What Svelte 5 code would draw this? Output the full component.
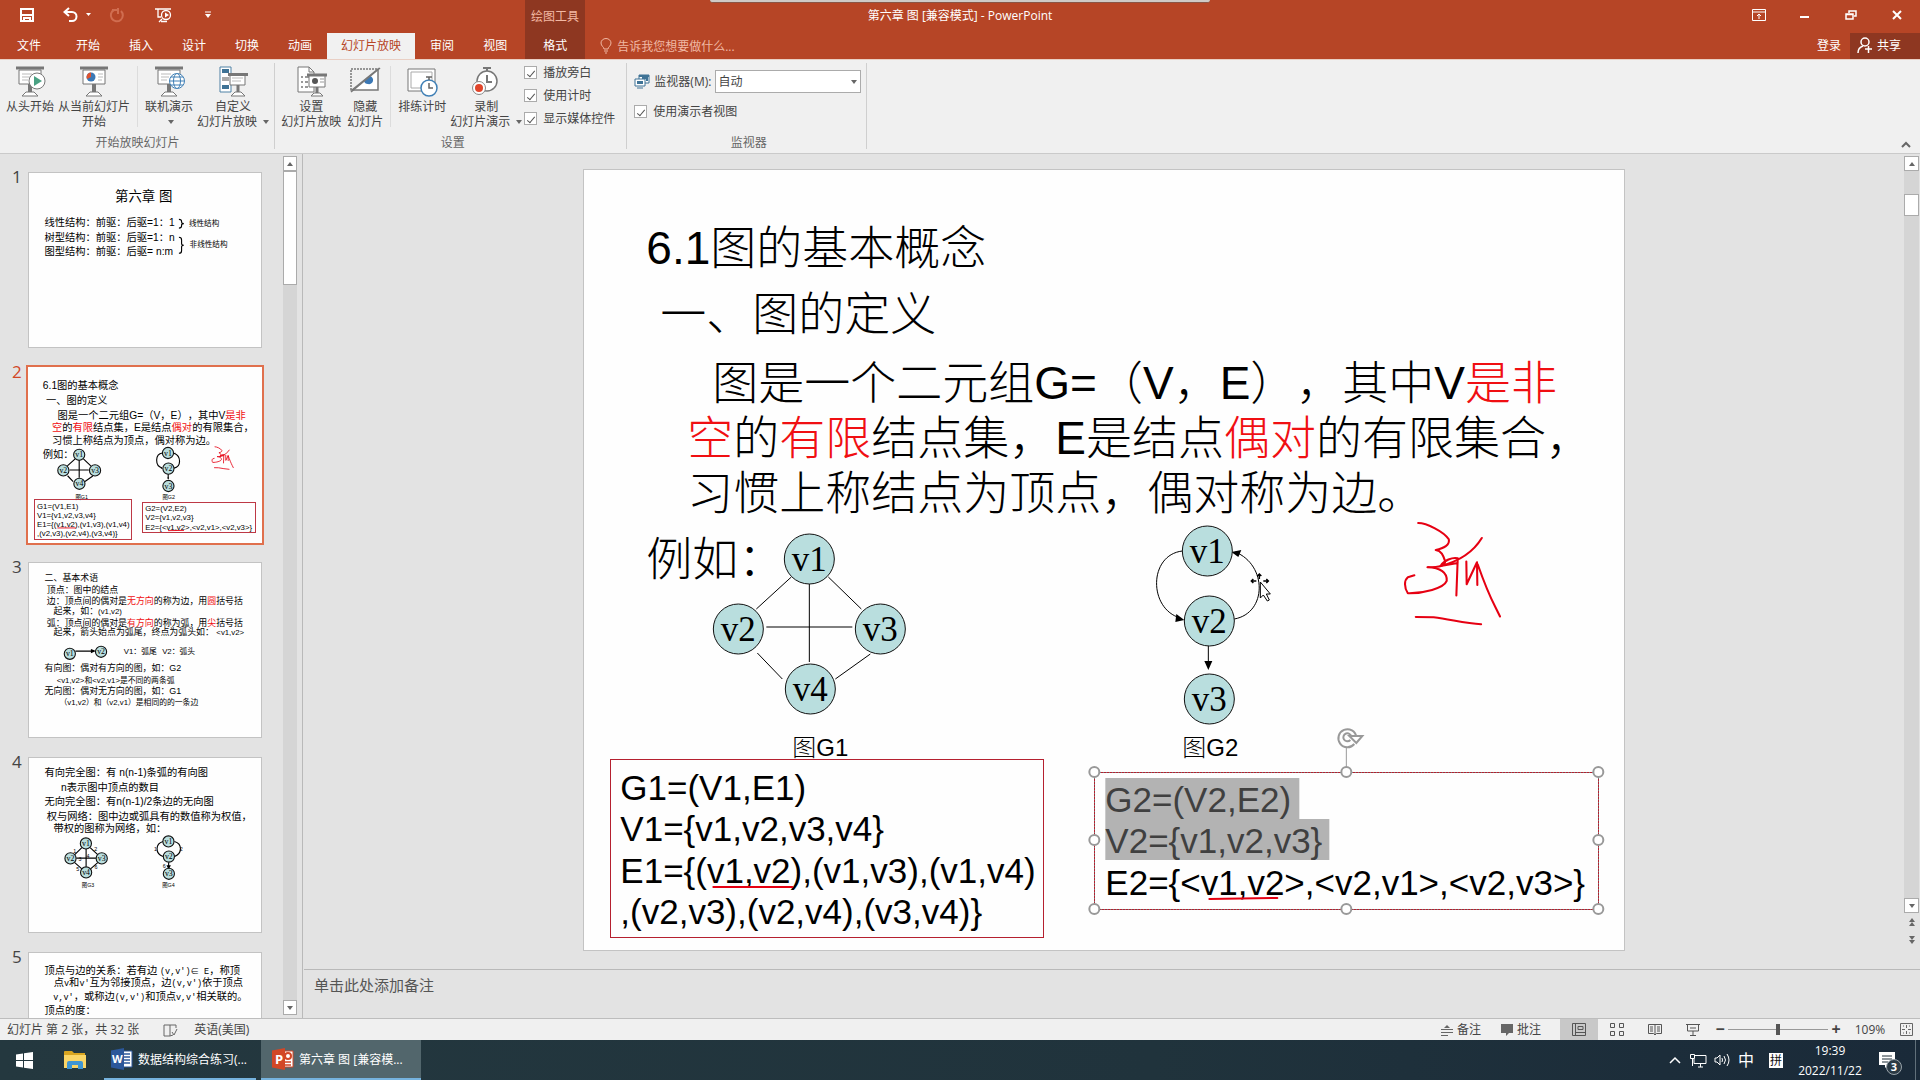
<script>
  const tabs = ['开始', '插入', '设计', '切换', '动画', '幻灯片放映', '审阅', '视图'];

  // Slide text: x, y is the baseline start; runs are [text, style?] pairs.
  const title = [
    { x: 62, y: 95, s: 46, runs: [['6.1图的基本概念']] },
    { x: 76, y: 161, s: 46, runs: [['一、图的定义']] },
    { x: 128, y: 230, s: 46, runs: [['图是一个二元组G=（V，E），其中V'], ['是非', 'red']] },
    { x: 103, y: 285, s: 46, runs: [['空', 'red'], ['的'], ['有限', 'red'], ['结点集，E是结点'], ['偶对', 'red'], ['的有限集合，']] },
    { x: 103, y: 340, s: 46, runs: [['习惯上称结点为顶点，偶对称为边。']] },
    { x: 62, y: 406, s: 46, runs: [['例如：']] },
    { x: 208, y: 587, s: 24, runs: [['图G1']] },
    { x: 598, y: 587, s: 24, runs: [['图G2']] },
    { x: 36, y: 631, s: 35, runs: [['G1=(V1,E1)']] },
    { x: 36, y: 672, s: 35, runs: [['V1={v1,v2,v3,v4}']] },
    { x: 36, y: 714, s: 35, runs: [['E1={(v1,v2),(v1,v3),(v1,v4)']] },
    { x: 36, y: 755, s: 35, runs: [[',(v2,v3),(v2,v4),(v3,v4)}']] },
    { x: 521, y: 726, s: 35, runs: [['E2={<v1,v2>,<v2,v1>,<v2,v3>}']] }
  ];
  const selectedLines = [
    { x: 521, y: 643, s: 35, runs: [['G2=(V2,E2)']] },
    { x: 521, y: 684, s: 35, runs: [['V2={v1,v2,v3}']] }
  ];

  const slides = [
    {
      texts: [
        { x: 386, y: 126, s: 60, runs: [['第六章 图']] },
        { x: 70, y: 238, s: 46, runs: [['线性结构：前驱：后驱=1：1']] },
        { x: 70, y: 304, s: 46, runs: [['树型结构：前驱：后驱=1：n']] },
        { x: 70, y: 368, s: 46, runs: [['图型结构：前驱：后驱= n:m']] },
        { x: 717, y: 238, s: 34, runs: [['线性结构']] },
        { x: 720, y: 332, s: 34, runs: [['非线性结构']] }
      ],
      paths: ['M672 209q12 0 12 9v4q0 6 10 6q-10 0-10 6v5q0 9-12 9', 'M672 289q12 0 12 12v16q0 8 10 8q-10 0-10 8v16q0 12-12 12'],
      nodes: []
    },
    { current: true },
    {
      texts: [
        { x: 70, y: 83, s: 40, runs: [['二、基本术语']] },
        { x: 80, y: 137, s: 40, runs: [['顶点：图中的结点']] },
        { x: 80, y: 186, s: 40, runs: [['边：顶点间的偶对是'], ['无方向', 'red'], ['的称为边，用'], ['圆', 'red'], ['括号括']] },
        { x: 110, y: 231, s: 40, runs: [['起来，如：'], ['(v1,v2)', 'small']] },
        { x: 80, y: 285, s: 40, runs: [['弧：顶点间的偶对是'], ['有方向', 'red'], ['的称为弧，用'], ['尖', 'red'], ['括号括']] },
        { x: 110, y: 325, s: 40, runs: [['起来，箭头始点为弧尾，终点为弧头如： '], ['<v1,v2>', 'small']] },
        { x: 425, y: 408, s: 35, runs: [['V1：弧尾']] },
        { x: 597, y: 408, s: 35, runs: [['V2：弧头']] },
        { x: 70, y: 484, s: 40, runs: [['有向图：偶对有方向的图，如：G2']] },
        { x: 124, y: 538, s: 35, runs: [['<v1,v2>和<v2,v1>是不同的两条弧']] },
        { x: 70, y: 587, s: 40, runs: [['无向图：偶对无方向的图，如：G1']] },
        { x: 137, y: 639, s: 35, runs: [['（v1,v2）和（v2,v1）是相同的的一条边']] }
      ],
      paths: ['M208 396H292M280 390l14 6l-14 6z'],
      nodes: [['v1', 183, 408], ['v2', 323, 399]]
    },
    {
      texts: [
        { x: 70, y: 82, s: 46, runs: [['有向完全图：有 n(n-1)条弧的有向图']] },
        { x: 144, y: 147, s: 46, runs: [['n表示图中顶点的数目']] },
        { x: 70, y: 212, s: 46, runs: [['无向完全图：有n(n-1)/2条边的无向图']] },
        { x: 80, y: 277, s: 46, runs: [['权与网络：图中边或弧具有的数值称为权值，']] },
        { x: 110, y: 331, s: 46, runs: [['带权的图称为网络，如：']] },
        { x: 237, y: 581, s: 24, runs: [['图G3']] },
        { x: 597, y: 581, s: 24, runs: [['图G4']] },
        { x: 198, y: 426, s: 24, runs: [['1']] },
        { x: 292, y: 420, s: 24, runs: [['2']] },
        { x: 258, y: 450, s: 24, runs: [['4']] },
        { x: 222, y: 462, s: 24, runs: [['3']] },
        { x: 212, y: 508, s: 24, runs: [['5']] },
        { x: 294, y: 500, s: 24, runs: [['6']] },
        { x: 560, y: 420, s: 24, runs: [['1']] },
        { x: 676, y: 420, s: 24, runs: [['2']] },
        { x: 600, y: 494, s: 24, runs: [['6']] }
      ],
      paths: [
        'M237 403L205 434M274 403L308 434M256 409V489M212 450H300M205 470L237 498M308 470L276 498',
        'M601 375C565 385 565 430 601 443M651 443C688 430 688 385 652 375M626 468V494M620 484l6 12l6-12z'
      ],
      nodes: [['v1', 255, 384], ['v2', 186, 451], ['v3', 326, 451], ['v4', 256, 514], ['v1', 625, 375], ['v2', 627, 443], ['v3', 627, 520]]
    },
    {
      texts: [
        { x: 69, y: 95, s: 46, runs: [['顶点与边的关系：若有边 '], ["(v,v')∈ E", 'mono'], ['，称顶']] },
        { x: 111, y: 149, s: 46, runs: [['点'], ['v', 'mono'], ['和'], ["v'", 'mono'], ['互为邻接顶点，边'], ["(v,v')", 'mono'], ['依于顶点']] },
        { x: 109, y: 210, s: 46, runs: [["v,v'", 'mono'], ['，或称边'], ["(v,v')", 'mono'], ['和顶点'], ["v,v'", 'mono'], ['相关联的。']] },
        { x: 69, y: 275, s: 46, runs: [['顶点的度：']] }
      ],
      paths: [],
      nodes: []
    }
  ];

  const graphNodes = [
    ['v1', 225, 390], ['v2', 154, 460], ['v3', 296, 460], ['v4', 226, 520],
    ['v1', 623, 382], ['v2', 625, 452], ['v3', 625, 530]
  ];
  const handles = [
    [510, 603], [762, 603], [1014, 603], [510, 671], [1014, 671], [510, 740], [762, 740], [1014, 740]
  ];
  let zoom = $state(50);
</script>

{#snippet textLine(t, cls)}
  <text class={cls} x={t.x} y={t.y} font-size={t.s}>{#each t.runs as r}<tspan class={r[1]}>{r[0]}</tspan>{/each}</text>
{/snippet}

{#snippet node(n)}
  <circle class="node" cx={n[1]} cy={n[2]} r="25" />
  <text class="node-label" x={n[1]} y={n[2] + 12} font-size="35" text-anchor="middle">{n[0]}</text>
{/snippet}

{#snippet graphSlide(editing)}
  {#if editing}
    <path fill="#b3b3b3" d="M521 609H715V650H745V691H521z" />
  {/if}
  <path class="ink" d="M207 408L172 440M244 408L277 440M225 415V493M182 458H268M173 484L198 510M286 485L251 510" />
  <path class="ink" d="M598 382C564 386 564 440 596 449M650 450C683 444 683 396 651 383M624 475V498" />
  <path d="M600 451l-8-6l-1 8zM647 383l10-2l-3 7zM620 492h8l-4 9z" />
  {#each graphNodes as n}{@render node(n)}{/each}
  {#each title as t}{@render textLine(t, '')}{/each}
  {#each selectedLines as t}{@render textLine(t, editing ? 'selected' : '')}{/each}
  <rect class="frame" x="26" y="590" width="433" height="178" />
  <rect class="frame" x="510" y="603" width="504" height="137" />
  <path class="pen" d="M129 718H208M625 730L693 729" />
  <g class="pen" transform="translate(495 332) scale(.344 .333)">
    <path d="M985 66C1010 66 1060 92 1074 115C1078 132 1060 142 1036 147C1054 150 1058 165 1063 180C1066 196 1040 200 1012 199C1050 200 1070 215 1068 240C1060 262 1000 278 955 277C944 260 944 238 955 229L974 223" />
    <path d="M1170 111C1150 145 1115 178 1050 195C1060 178 1085 168 1100 172L1096 284M1050 195L1100 186M1125 182L1126 250L1156 184L1157 252M1158 190C1175 240 1195 290 1210 320L1223 347" />
    <path d="M978 348L1030 349C1080 355 1120 368 1168 370" />
  </g>
  {#if editing}
    <rect class="dots" x="510" y="603" width="504" height="137" />
    <path d="M762 579V598" stroke="#999" />
    {#each handles as h}<circle class="handle" cx={h[0]} cy={h[1]} r="5" />{/each}
    <path d="M770 575A9 9 0 1 1 772 568" class="turn" />
    <path d="M766 571A4 4 0 1 1 767 568" class="turn" />
    <path d="M765 567h13l-6 7z" fill="#fff" stroke="#999" stroke-width="2" />
    <path d="M675 406v4M667 412h5M679 412h5M673 407l2-2l2 2M669 410l-2 2l2 2M682 410l2 2l-2 2" stroke="#000" stroke-width="1.500" fill="none" />
    <path d="M676 413v16l3-3l4 6l2-1l-3-6h4z" fill="#fff" stroke="#000" />
  {/if}
{/snippet}

{#snippet easel()}
  <path d="M5 4h22v14H5z" fill="#fff" stroke="#777" />
  <path d="M2 2h28" stroke="#777" stroke-width="3" />
  <path d="M16 18v8" stroke="#777" stroke-width="4" />
  <path d="M12 26h8l4 4H8z" fill="#fff" stroke="#777" />
{/snippet}

<div class="app">
  <header>
    <div class="titlebar">
      <div class="qat">
        <button aria-label="保存"><svg width="16" height="16" viewBox="0 0 16 16"><path d="M2 2h12v12H2zM2 8h12M5 14v-3h6v3" fill="none" stroke="#fff" stroke-width="2" /></svg></button>
        <button class="undo" aria-label="撤消"><svg width="30" height="16" viewBox="0 0 30 16"><path d="M6 1L1.500 5L6 9M2 5h7a4 4 0 0 1 0 9H6" fill="none" stroke="#fff" stroke-width="2" /><path d="M23 6h5l-2.500 3z" fill="#fff" /></svg></button>
        <button class="redo" aria-label="重复"><svg width="16" height="16" viewBox="0 0 16 16"><path d="M9 3H3M5 3a6 6 0 1 0 7 1M9 1v6" fill="none" stroke="#d06d50" stroke-width="2" /></svg></button>
        <button class="show" aria-label="从头开始放映"><svg width="18" height="16" viewBox="0 0 18 16"><path d="M0 2h16M3 2v8h3M4 15l3-3M6 14.500h6" fill="none" stroke="#fff" stroke-width="1.300" /><circle cx="11" cy="8" r="4.500" fill="#b64526" stroke="#fff" stroke-width="1.300" /><path d="M10 5.500l4 2.500l-4 2.500z" fill="#fff" /></svg></button>
        <button class="more" aria-label="自定义快速访问工具栏"><svg width="8" height="8" viewBox="0 0 8 8"><path d="M1 1h6" stroke="#fff" /><path d="M1 3h6L4 7z" fill="#fff" /></svg></button>
      </div>
      <div class="ctx">绘图工具</div>
      <div class="doc">第六章 图 [兼容模式] - PowerPoint</div>
      <div class="win">
        <button aria-label="功能区显示选项"><svg width="14" height="12" viewBox="0 0 14 12"><path d="M.5.500h13v11H.5zM.5 3h13M7 10V5M5 7l2-2l2 2" fill="none" stroke="#fff" /></svg></button>
        <button aria-label="最小化"><svg width="14" height="12" viewBox="0 0 14 12"><path d="M2 8h9" stroke="#fff" stroke-width="2" /></svg></button>
        <button aria-label="还原"><svg width="14" height="12" viewBox="0 0 14 12"><path d="M2 5h7v5H2zM5 4V2h7v5h-2M2 5.500h7M5 2h7" fill="none" stroke="#fff" stroke-width="1.500" /></svg></button>
        <button aria-label="关闭"><svg width="14" height="12" viewBox="0 0 14 12"><path d="M3 2l8 8M11 2l-8 8" stroke="#fff" stroke-width="2" /></svg></button>
      </div>
      <div class="float-bar"></div>
    </div>
    <nav class="tabs">
      <button class="file">文件</button>
      {#each tabs as t}<button class:active={t === '幻灯片放映'}>{t}</button>{/each}
      <button class="format">格式</button>
      <label class="tell">
        <svg width="12" height="16" viewBox="0 0 12 16"><path d="M4 11C4 9 1 8 1 5a5 4.500 0 0 1 10 0c0 3-3 4-3 6zM4 13h4M5 15h2" fill="none" stroke="#f0b8a4" /></svg>
        <input placeholder="告诉我您想要做什么..." aria-label="告诉我您想要做什么" />
      </label>
      <button class="login">登录</button>
      <button class="share"><svg width="16" height="17" viewBox="0 0 16 17"><circle cx="8" cy="5" r="4" fill="none" stroke="#fff" stroke-width="1.500" /><path d="M1 16c0-4 2-6 5-7M8 12h7M11.500 9v7" fill="none" stroke="#fff" stroke-width="1.500" /></svg>共享</button>
    </nav>
  </header>

  <section class="ribbon">
    <div class="group first">
      <div class="cmds">
        <button><svg width="32" height="32" viewBox="0 0 32 32">{@render easel()}<path d="M8 8h10M8 11h8M8 14h6" stroke="#bbb" /><circle cx="23" cy="15" r="8" fill="#fff" stroke="#777" /><path d="M20 10l8 5l-8 5z" fill="#4aa183" /></svg>从头开始</button>
        <button><svg width="32" height="32" viewBox="0 0 32 32">{@render easel()}<path d="M20 8h5M20 11h5M20 14h4" stroke="#bbb" /><circle cx="13" cy="11" r="4.500" fill="#3b78b5" /><path d="M13 11V6.500a4.500 4.500 0 0 0-4 6.500z" fill="#e0532f" /></svg>从当前幻灯片<br />开始</button>
        <i></i>
        <button><svg width="32" height="32" viewBox="0 0 32 32">{@render easel()}<path d="M8 8h10M8 11h8M8 14h6" stroke="#bbb" /><g fill="#fff" stroke="#3f7fb5"><circle cx="24" cy="15" r="7.500" /><ellipse cx="24" cy="15" rx="3.500" ry="7.500" /><path d="M17 15h14M18 11h12M18 19h12" /></g></svg>联机演示<br /><b class="down"></b></button>
        <button><svg width="32" height="32" viewBox="0 0 32 32"><path d="M3 1h11v25H3z" fill="#fff" stroke="#4f81a5" /><path d="M5 3h7v4H5zM5 19h7v4H5z" fill="#3f7396" /><path d="M5 11h7v4H5z" fill="#aaa" /><path d="M13 9h15v10H13z" fill="#fff" stroke="#777" /><path d="M11 8.500h20M21 19v7" stroke="#777" stroke-width="3" /><path d="M15 12h11M15 15h9" stroke="#bbb" /><path d="M18 26h6l4 4H14z" fill="#fff" stroke="#777" /></svg>自定义<br />幻灯片放映 <b class="down"></b></button>
      </div>
      <div class="name">开始放映幻灯片</div>
    </div>
    <div class="group">
      <div class="cmds">
        <button><svg width="32" height="32" viewBox="0 0 32 32"><path d="M3 1h11l5 5v20H3z" fill="#fff" stroke="#777" /><path d="M14 1v5h5" fill="none" stroke="#777" /><path d="M6 11h2M6 16h2M6 21h2M10 11h4M10 16h3M10 21h3" stroke="#999" stroke-width="2" /><path d="M14 9h16v12H14z" fill="#fff" stroke="#777" /><path d="M12 9h20M22 21v6" stroke="#777" stroke-width="3" /><circle cx="20" cy="15" r="3" fill="#555" /><path d="M25 13h4M25 16h4" stroke="#999" /><path d="M19 27h6l3 3H16z" fill="#fff" stroke="#777" /></svg>设置<br />幻灯片放映</button>
        <button class="hide"><svg width="32" height="32" viewBox="0 0 32 32"><path d="M2 24V3h26" fill="none" stroke="#777" stroke-dasharray="2 1" stroke-width="1.500" /><path d="M3 24L29 3v21z" fill="#fff" stroke="#777" stroke-width="1.500" /><path d="M15 15l6-5a4 4 0 0 1-2 8a4 4 0 0 1-4-3z" fill="#3b78b5" /><path d="M2 26L31 2" stroke="#777" stroke-width="1.500" /></svg>隐藏<br />幻灯片</button>
        <i></i>
        <button><svg width="32" height="32" viewBox="0 0 32 32"><path d="M2 3h27v22H2z" fill="#fff" stroke="#777" /><path d="M5 6h21v16H5z" fill="#fff" stroke="#aaa" /><circle cx="23" cy="22" r="8" fill="#fff" stroke="#3f7fb5" stroke-width="1.500" /><path d="M23 14v-3M20 11h6M23 17v5h4" fill="none" stroke="#666" stroke-width="1.500" /></svg>排练计时</button>
        <button><svg width="32" height="32" viewBox="0 0 32 32"><circle cx="17" cy="15" r="10" fill="#fff" stroke="#777" stroke-width="1.500" /><path d="M17 5V2M13 2h8M17 9v7h5" fill="none" stroke="#777" stroke-width="2" /><circle cx="9" cy="22" r="6.500" fill="#fff" stroke="#888" /><circle cx="9" cy="22" r="4" fill="#e0452b" /></svg>录制<br />幻灯片演示 <b class="down"></b></button>
        <div class="checks">
          <label><input type="checkbox" checked />播放旁白</label>
          <label><input type="checkbox" checked />使用计时</label>
          <label><input type="checkbox" checked />显示媒体控件</label>
        </div>
      </div>
      <div class="name">设置</div>
    </div>
    <div class="group">
      <div class="monitor">
        <label><svg width="16" height="15" viewBox="0 0 16 15"><path d="M5 1h10v8H5z" fill="#fff" stroke="#3f7396" /><path d="M5 2h10M8 4h5v3" stroke="#3f7396" stroke-width="2" fill="none" /><path d="M1 5h10v7H1z" fill="#fff" stroke="#3f7396" /><path d="M3 7h6v3H3z" fill="#3f7396" /><path d="M3 14h6" stroke="#3f7396" /></svg>监视器(M):
          <span class="select"><select><option>自动</option></select></span></label>
        <label><input type="checkbox" checked />使用演示者视图</label>
      </div>
      <div class="name">监视器</div>
    </div>
    <button class="collapse" aria-label="折叠功能区"><svg width="10" height="8" viewBox="0 0 10 8"><path d="M1 6l4-4l4 4" fill="none" stroke="#666" stroke-width="2" /></svg></button>
  </section>

  <main>
    <aside>
      <ol>
        {#each slides as s, i}
          <li class:current={s.current}>
            <span class="num">{i + 1}</span>
            <svg class="slide" viewBox="0 1 1040 780">
              {#if s.current}
                {@render graphSlide(false)}
              {:else}
                {#each s.paths as p}<path class="ink" d={p} />{/each}
                {#each s.nodes as n}{@render node(n)}{/each}
                {#each s.texts as t}{@render textLine(t, '')}{/each}
              {/if}
            </svg>
          </li>
        {/each}
      </ol>
      <div class="scroll">
        <button aria-label="向上滚动"><b class="up"></b></button>
        <div class="track"><div class="thumb long"></div></div>
        <button aria-label="向下滚动"><b class="down"></b></button>
      </div>
    </aside>
    <div class="editor">
      <div class="stage">
        <div class="canvas"><svg class="slide" viewBox="0 1 1040 780">{@render graphSlide(true)}</svg></div>
        <div class="scroll">
          <button aria-label="向上滚动"><b class="up"></b></button>
          <div class="track"><div class="gap"></div><div class="thumb"></div></div>
          <button aria-label="向下滚动"><b class="down"></b></button>
          <button class="jump" aria-label="上一张幻灯片"><b class="up"></b><b class="up"></b></button>
          <button class="jump" aria-label="下一张幻灯片"><b class="down"></b><b class="down"></b></button>
        </div>
      </div>
      <textarea class="notes" placeholder="单击此处添加备注" aria-label="备注"></textarea>
    </div>
  </main>

  <footer class="status">
    <span class="count">幻灯片 第 2 张，共 32 张</span>
    <button class="spell" aria-label="拼写检查"><svg width="15" height="14" viewBox="0 0 15 14"><path d="M7 2v11H1V2zM7 2h6v3M7 13l3-1M9 9l2 3l3-6" fill="none" stroke="#666" /></svg></button>
    <button class="lang">英语(美国)</button>
    <button class="note-btn"><svg width="12" height="12" viewBox="0 0 12 12"><path d="M0 5.500h12M0 8.500h12M0 11.500h7" stroke="#666" /><path d="M3 4l3-3l3 3z" fill="#666" /></svg>备注</button>
    <button class="comment-btn"><svg width="12" height="12" viewBox="0 0 12 12"><path d="M0 0h12v9H8l-3 3V9H0z" fill="#666" /></svg>批注</button>
    <button class="view on" aria-label="普通视图"><svg width="14" height="13" viewBox="0 0 14 13"><path d="M.5.500h13v12H.5zM3.500.500v12M3.500 9.500h10M6 3.500h5v3H6z" fill="none" stroke="#555" /></svg></button>
    <button class="view" aria-label="幻灯片浏览"><svg width="14" height="13" viewBox="0 0 14 13"><path d="M.5.500h4v4h-4zM9.500.500h4v4h-4zM.5 8.500h4v4h-4zM9.500 8.500h4v4h-4z" fill="none" stroke="#555" /></svg></button>
    <button class="view" aria-label="阅读视图"><svg width="14" height="13" viewBox="0 0 14 13"><path d="M7 1.500H.5v9h5L7 12l1.500-1.500h5v-9zV12M2 4h3M2 6h3M2 8h3M9 4h3M9 6h3M9 8h3" fill="none" stroke="#555" /></svg></button>
    <button class="view" aria-label="幻灯片放映"><svg width="14" height="13" viewBox="0 0 14 13"><path d="M0 1.500h14M1.500 2v6h11V2M7 8v4M4 12.500h6M4 5h6" fill="none" stroke="#555" /></svg></button>
    <button class="sign" aria-label="缩小">−</button>
    <input type="range" min="0" max="100" bind:value={zoom} aria-label="缩放" />
    <button class="sign" aria-label="放大">+</button>
    <button class="pct">109%</button>
    <button class="fit" aria-label="使幻灯片适应当前窗口"><svg width="13" height="13" viewBox="0 0 13 13"><path d="M.5.500h12v12H.5z" fill="none" stroke="#666" /><path d="M6.500 2v3M6.500 8v3M2 6.500h3M8 6.500h3M3 3h1M9 3h1M3 10h1M9 10h1" stroke="#666" /></svg></button>
  </footer>

  <div class="taskbar">
    <button class="start" aria-label="开始"><svg width="17" height="17" viewBox="0 0 17 17"><path d="M0 2.500L7 1.500V8H0zM8 1.300L17 0v8H8zM0 9h7v6.500L0 14.500zM8 9h9v8l-9-1.300z" fill="#fff" /></svg></button>
    <button class="files" aria-label="文件资源管理器"><svg width="22" height="20" viewBox="0 0 22 20"><path d="M0 2q0-1 1-1h7l2 2h11v5H0z" fill="#d9a520" /><path d="M0 5h22v13H0z" fill="#fbd667" /><path d="M3 19v-6q0-2 2-2h12q2 0 2 2v6h-5v-4H8v4z" fill="#3f96d4" /></svg></button>
    <button class="app-btn word"><svg width="22" height="22" viewBox="0 0 22 22"><path d="M12 3h9v16h-9z" fill="#fff" stroke="#2b579a" /><path d="M13 6h6M13 9h6M13 12h6M13 15h6" stroke="#2b579a" stroke-width="1.500" /><path d="M0 2.500L13 0v22L0 19.500z" fill="#2b579a" /><text class="logo" x="1" y="15" font-size="11">W</text></svg><span>数据结构综合练习(...</span></button>
    <button class="app-btn ppt"><svg width="22" height="22" viewBox="0 0 22 22"><path d="M12 3h9v16h-9z" fill="#fff" stroke="#d24726" /><circle cx="16" cy="8" r="3" fill="none" stroke="#d24726" stroke-width="2" /><path d="M13 14h6M13 17h6" stroke="#d24726" stroke-width="1.500" /><path d="M0 2.500L13 0v22L0 19.500z" fill="#d24726" /><text class="logo" x="3" y="16" font-size="13">P</text></svg><span>第六章 图 [兼容模...</span></button>
    <div class="tray">
      <button aria-label="显示隐藏的图标"><svg width="12" height="8" viewBox="0 0 12 8"><path d="M1 7l5-5l5 5" fill="none" stroke="#fff" stroke-width="1.500" /></svg></button>
      <button class="net" aria-label="网络"><svg width="17" height="15" viewBox="0 0 17 15"><path d="M5 2.500h11v8H4V6M8 14h5M10.500 11v3M.5 1.500h4v4h-4zM2.500 6v7" fill="none" stroke="#fff" /></svg></button>
      <button aria-label="音量"><svg width="17" height="14" viewBox="0 0 17 14"><path d="M1 5h2l3-3v10L3 9H1zM8 5q1 2 0 4M10 3q3 4 0 8M13 1q4 6 0 12" fill="none" stroke="#fff" /></svg></button>
      <button class="zh">中</button>
      <button class="ime"><span>拼</span></button>
      <button class="clock"><span>19:39</span><span>2022/11/22</span></button>
      <button class="notif" aria-label="通知"><svg width="16" height="16" viewBox="0 0 16 16"><path d="M0 0h16v13H9l-3 3v-3H0z" fill="#fff" /><path d="M3 4h10M3 7h10M3 10h6" stroke="#1c2c37" /></svg><em>3</em></button>
    </div>
  </div>
</div>

<style>
  :global(body) {
    margin: 0;
    overflow: hidden;
  }
  .app {
    display: flex;
    flex-direction: column;
    height: 100vh;
    font: 12px/15px 'Open Sans', 'Noto Sans CJK SC', sans-serif;
    color: #444;
    background: #e3e3e3;
  }
  button,
  input,
  select,
  textarea {
    font: inherit;
    color: inherit;
    border: 0;
    padding: 0;
    margin: 0;
    background: none;
  }
  button {
    white-space: nowrap;
  }
  svg {
    display: block;
    flex: none;
  }

  header {
    background: #b64526;
    color: #fff;
    border-bottom: 1px solid #e9cfc4;
  }
  .titlebar {
    position: relative;
    display: grid;
    grid-template-columns: 525px 60px 1fr 585px;
    height: 33px;
  }
  .qat {
    display: flex;
    align-items: center;
    padding: 0 0 3px 19px;
  }
  .undo {
    margin-left: 28px;
  }
  .redo {
    margin-left: 16px;
  }
  .show {
    margin-left: 30px;
  }
  .more {
    margin-left: 31px;
  }
  .ctx {
    background: #8e3721;
    color: #f3b9a4;
    text-align: center;
    line-height: 33px;
  }
  .doc {
    text-align: center;
    line-height: 32px;
  }
  .win {
    display: flex;
    justify-content: flex-end;
    align-items: center;
    gap: 32px;
    padding: 0 16px 3px 0;
  }
  .float-bar {
    position: absolute;
    top: 0;
    left: 37%;
    width: 26%;
    height: 2px;
    background: #cfcac6;
    border-bottom: 1px solid #8a5545;
    border-radius: 0 0 3px 3px;
  }
  .tabs {
    display: flex;
    align-items: stretch;
    height: 26px;
  }
  .tabs button {
    padding: 0 14px 2px;
    margin-right: 1px;
  }
  .tabs .file {
    padding: 0 17px 2px;
    margin-right: 4px;
  }
  .tabs .active {
    background: #f1f1f1;
    color: #b64526;
  }
  .tabs .format {
    background: #8e3721;
    padding: 0 18px 2px;
    margin: 0 15px 0 3px;
  }
  .tell {
    display: flex;
    align-items: center;
    gap: 5px;
    flex: 1;
  }
  .tell input {
    width: 160px;
  }
  .tell input::placeholder {
    color: #f0b8a4;
    opacity: 1;
  }
  .tabs .login {
    padding: 0 9px 2px;
    margin: 0;
  }
  .tabs .share {
    display: flex;
    align-items: center;
    gap: 4px;
    background: #8e3721;
    padding: 0 19px 2px 7px;
    margin: 0;
  }

  .ribbon {
    display: flex;
    height: 93px;
    background: #f0f0f0;
    border-bottom: 1px solid #cacaca;
  }
  .group {
    display: flex;
    flex-direction: column;
    margin: 3px 0 4px;
    border-right: 1px solid #cfcfcf;
    padding: 3px 0 0 4px;
  }
  .first {
    padding-right: 3px;
  }
  .cmds {
    display: flex;
    flex: 1;
    min-height: 0;
  }
  .cmds > button {
    display: block;
    padding: 0 2px;
    align-self: flex-start;
  }
  .cmds > .hide {
    margin-left: 2px;
  }
  .cmds > button svg {
    margin: 0 auto 1px;
  }
  .cmds > i {
    width: 1px;
    margin: 0 5px 10px;
    background: #dcdcdc;
  }
  .name {
    text-align: center;
    color: #666;
    line-height: 12px;
  }
  b {
    display: inline-block;
    width: 0;
    height: 0;
    border: 3px solid transparent;
  }
  b.down {
    border-top: 4px solid #666;
    border-bottom: 0;
    vertical-align: 2px;
    margin-left: 3px;
  }
  b.up {
    border-bottom: 4px solid #666;
    border-top: 0;
  }
  .checks {
    display: flex;
    flex-direction: column;
    gap: 8px;
    padding: 0 11px 0 0;
    margin-top: -1px;
  }
  .ribbon label {
    display: flex;
    align-items: center;
    gap: 6px;
  }
  input[type='checkbox'] {
    appearance: none;
    width: 13px;
    height: 13px;
    flex: none;
    background: #fff;
    border: 1px solid #ababab;
    display: grid;
    place-items: center;
  }
  input[type='checkbox']:checked::after {
    content: '';
    width: 3px;
    height: 7px;
    border: solid #555;
    border-width: 0 1px 1px 0;
    transform: rotate(40deg);
  }
  .monitor {
    display: flex;
    flex-direction: column;
    gap: 11px;
    flex: 1;
    padding: 4px 5px 0 3px;
  }
  .monitor label:first-child {
    gap: 4px;
  }
  .select {
    display: block;
    position: relative;
    width: 146px;
  }
  .select::after {
    content: '';
    position: absolute;
    right: 4px;
    top: 10px;
    border: 3px solid transparent;
    border-top: 4px solid #666;
    border-bottom: 0;
  }
  select {
    appearance: none;
    width: 100%;
    height: 23px;
    background: #fff;
    border: 1px solid #ababab;
    padding: 0 2px;
  }
  .collapse {
    margin: auto 9px 4px auto;
  }

  main {
    flex: 1;
    min-height: 0;
    display: flex;
  }
  aside {
    display: flex;
    width: 303px;
    flex: none;
    border-right: 1px solid #b9b9b9;
    box-sizing: border-box;
    gap: 19px;
  }
  ol {
    list-style: none;
    margin: 0;
    padding: 18px 0 0 10px;
    width: 254px;
    overflow: hidden;
    display: flex;
    flex-direction: column;
    gap: 19px;
  }
  li {
    display: flex;
    align-items: flex-start;
  }
  .num {
    width: 18px;
    font-size: 17px;
    line-height: 10px;
    text-align: left;
    padding-left: 2px;
    box-sizing: border-box;
  }
  .slide {
    background: #fefefe;
    border: 1px solid #c3c3c3;
    box-sizing: border-box;
  }
  li .slide {
    width: 234px;
    height: 176px;
  }
  .current .num {
    color: #d24726;
  }
  .current .slide {
    border-color: #fefefe;
    outline: 2px solid #e0704d;
  }
  .scroll {
    display: flex;
    flex-direction: column;
    width: 14px;
    padding: 2px 0 3px;
  }
  .scroll button {
    height: 15px;
    background: #fff;
    border: 1px solid #ababab;
    display: grid;
    place-items: center;
  }
  .scroll b.down {
    margin: 0;
  }
  .scroll .jump {
    border: 0;
    background: none;
    height: 18px;
    align-content: center;
  }
  .track {
    flex: 1;
    background: #d5d5d5;
  }
  .thumb {
    height: 20px;
    background: #fff;
    border: 1px solid #ababab;
  }
  .thumb.long {
    height: 112px;
  }
  .gap {
    height: 23px;
  }
  .editor {
    flex: 1;
    min-width: 0;
    display: flex;
    flex-direction: column;
    padding-left: 1px;
  }
  .stage {
    flex: 1;
    min-height: 0;
    display: flex;
    border-bottom: 1px solid #b9b9b9;
  }
  .canvas {
    flex: 1;
    min-width: 0;
    display: flex;
    justify-content: center;
    padding: 15px 0 18px;
  }
  .canvas .slide {
    height: 100%;
    aspect-ratio: 4 / 3;
  }
  .stage .scroll {
    width: 15px;
    padding: 2px 1px 20px 0;
  }
  .notes {
    height: 48px;
    resize: none;
    box-sizing: border-box;
    padding: 5px 10px;
    font-size: 15px;
    line-height: 20px;
  }
  .notes::placeholder {
    color: #555;
    opacity: 1;
  }

  .slide text {
    font-family: 'Liberation Sans', 'Noto Sans CJK SC', sans-serif;
    font-weight: 300;
    white-space: pre;
    text-spacing-trim: space-all;
    fill: #000;
  }
  li .slide text {
    font-weight: 400;
  }
  .slide .red {
    fill: #f00f12;
  }
  .slide .small {
    font-size: 35px;
  }
  .slide .mono {
    font-family: 'Liberation Mono', 'Noto Sans CJK SC', monospace;
    font-size: 38px;
  }
  .slide text.selected {
    fill: #404040;
  }
  .slide .node-label {
    font-family: 'Liberation Serif', serif;
  }
  .node {
    fill: #b9dede;
    stroke: #111;
  }
  .ink {
    fill: none;
    stroke: #000;
  }
  li .ink,
  li .node {
    stroke-width: 5;
  }
  .frame {
    fill: none;
    stroke: #b5202f;
    shape-rendering: crispEdges;
  }
  li .frame {
    stroke-width: 4;
  }
  .dots {
    fill: none;
    stroke: #777;
    stroke-dasharray: 1 2;
    shape-rendering: crispEdges;
  }
  .pen {
    fill: none;
    stroke: #e60012;
    stroke-width: 2;
    stroke-linecap: round;
    stroke-linejoin: round;
  }
  g.pen {
    stroke-width: 6;
  }
  li .pen {
    stroke-width: 4;
  }
  li g.pen {
    stroke-width: 11;
  }
  .handle {
    fill: #fff;
    stroke: #999;
    stroke-width: 2;
  }
  .turn {
    fill: none;
    stroke: #999;
    stroke-width: 2;
  }

  .status {
    display: flex;
    align-items: center;
    height: 21px;
    border-top: 1px solid #bdbdbd;
    background: #f0f0f0;
    padding: 0 7px;
  }
  .spell {
    margin-left: 24px;
  }
  .lang {
    margin-left: 16px;
  }
  .note-btn,
  .comment-btn {
    display: flex;
    align-items: center;
    gap: 4px;
  }
  .note-btn {
    margin-left: auto;
  }
  .comment-btn {
    margin: 0 19px 0 20px;
  }
  .view {
    width: 38px;
    height: 21px;
    display: grid;
    place-items: center;
  }
  .on {
    background: #c8c8c8;
  }
  .sign {
    width: 16px;
    font-size: 16px;
    font-weight: 700;
  }
  input[type='range'] {
    appearance: none;
    width: 100px;
    height: 12px;
    background: linear-gradient(#999, #999) center / 100% 1px no-repeat;
  }
  input[type='range']::-webkit-slider-thumb {
    appearance: none;
    width: 4px;
    height: 11px;
    background: #555;
  }
  .pct {
    width: 32px;
    margin: 0 14px 0 10px;
  }

  .taskbar {
    display: flex;
    height: 40px;
    color: #fff;
    background: linear-gradient(90deg, #24383f, #20333c 60%, #1a2a39);
  }
  .start {
    padding: 0 16px;
  }
  .files {
    padding: 0 18px 0 15px;
  }
  .app-btn {
    display: flex;
    align-items: center;
    gap: 5px;
    box-sizing: border-box;
    padding: 0 7px;
    border-bottom: 2px solid #76b3de;
  }
  .word {
    width: 152px;
    margin-right: 5px;
  }
  .ppt {
    width: 160px;
    padding-left: 11px;
    background: #52666c;
  }
  .slide .logo,
  .logo {
    fill: #fff;
    font-family: 'Open Sans', sans-serif;
    font-weight: 700;
  }
  .tray {
    display: flex;
    align-items: center;
    margin-left: auto;
    gap: 7px;
    padding-right: 4px;
  }
  .net {
    margin-left: 2px;
  }
  .zh {
    font-size: 16px;
    padding: 0 6px 0 0;
  }
  .ime span {
    display: block;
    background: #fff;
    color: #111;
    width: 14px;
    line-height: 15px;
    margin: 0 7px 0 2px;
  }
  .clock {
    display: flex;
    flex-direction: column;
    align-items: center;
    gap: 5px;
    width: 66px;
  }
  .notif {
    position: relative;
    padding: 0 20px 0 9px;
    border-right: 1px solid #61707a;
    height: 40px;
  }
  .notif em {
    position: absolute;
    left: 16px;
    top: 19px;
    width: 14px;
    height: 14px;
    line-height: 14px;
    border: 1px solid #9aa4ab;
    border-radius: 50%;
    background: #2b3a45;
    font-style: normal;
    font-weight: 700;
    font-size: 11px;
  }
</style>
